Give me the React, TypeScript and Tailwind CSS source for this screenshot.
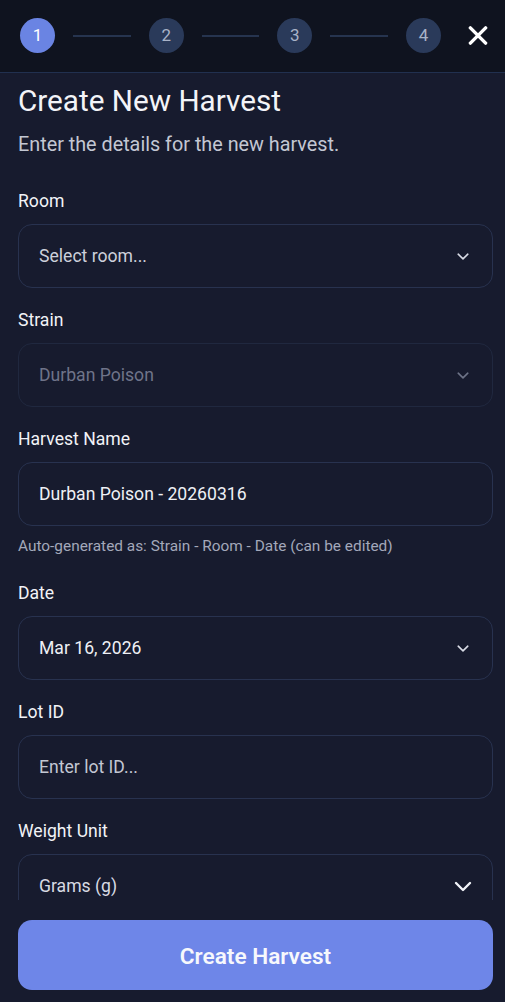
import { ReactNode } from "react"

const box = "h-[64px] rounded-[14px] border flex items-center pl-[20px] pr-[20px] text-[17.6px]"

function Chevron({ dim = false, big = false }: { dim?: boolean; big?: boolean }) {
  if (big) {
    return (
      <svg width="18" height="11" viewBox="0 0 18 11" className="shrink-0">
        <path d="M2 2 L9 9 L16 2" fill="none" stroke="#f1f3f8" strokeWidth="2.4" strokeLinecap="round" strokeLinejoin="round" />
      </svg>
    )
  }
  return (
    <div className="w-[18px] flex justify-center shrink-0">
      <svg width="12" height="7" viewBox="0 0 12 7">
        <path d="M1.2 1.2 L6 5.8 L10.8 1.2" fill="none" stroke={dim ? "#6d7387" : "#d9dce6"} strokeWidth="1.6" strokeLinecap="round" strokeLinejoin="round" />
      </svg>
    </div>
  )
}

function Field({ label, children, extra }: { label: string; children: ReactNode; extra?: ReactNode }) {
  return (
    <div className="flex flex-col">
      <label className="text-[17.6px] leading-[22px] text-[#f2f3f7] mb-[12px]">{label}</label>
      {children}
      {extra}
    </div>
  )
}

function Step({ n, active = false }: { n: number; active?: boolean }) {
  return (
    <div className={`w-[35px] h-[35px] rounded-full shrink-0 flex items-center justify-center text-[17px] ${active ? "bg-[#6a84e3] text-white" : "bg-[#2a3a5a] text-[#a9b3c8]"}`}>
      {n}
    </div>
  )
}

export default function App() {
  return (
    <div className="w-[505px] h-[1002px] flex flex-col bg-[#171b2e] font-['Roboto',sans-serif] overflow-hidden">
      {/* steps header */}
      <div className="h-[73px] shrink-0 bg-[#0f131f] border-b border-[#21304f] flex items-center pl-[20px] pr-[17px] pb-[1px]">
        <Step n={1} active />
        <div className="flex-1 h-[2px] bg-[#26344f] mx-[18px]" />
        <Step n={2} />
        <div className="flex-1 h-[2px] bg-[#26344f] mx-[18px]" />
        <Step n={3} />
        <div className="flex-1 h-[2px] bg-[#26344f] mx-[18px]" />
        <Step n={4} />
        <button className="ml-[27px] w-[20px] h-[20px] flex items-center justify-center">
          <svg width="21" height="21" viewBox="0 0 21 21">
            <path d="M2.5 2.5 L18.5 18.5 M18.5 2.5 L2.5 18.5" stroke="#ffffff" strokeWidth="3.6" strokeLinecap="round" />
          </svg>
        </button>
      </div>

      {/* form */}
      <div className="flex-1 overflow-hidden pl-[18px] pr-[12px] pt-[10px]">
        <h1 className="text-[29.7px] leading-[36px] text-[#f3f4f8]">Create New Harvest</h1>
        <p className="text-[19.8px] leading-[26px] text-[#c3c7d3] mt-[13px]">Enter the details for the new harvest.</p>

        <div className="flex flex-col gap-[21px] mt-[32px]">
          <Field label="Room">
            <div className={`${box} border-[#28324f] justify-between`}>
              <span className="text-[#cdd0db]">Select room...</span>
              <Chevron />
            </div>
          </Field>

          <Field label="Strain">
            <div className={`${box} border-[#20283f] justify-between`}>
              <span className="text-[#6f7489]">Durban Poison</span>
              <Chevron dim />
            </div>
          </Field>

          <Field
            label="Harvest Name"
            extra={<p className="text-[15.4px] leading-[20px] text-[#a3a8ba] mt-[10px] mb-[5px]">Auto-generated as: Strain - Room - Date (can be edited)</p>}
          >
            <div className={`${box} border-[#28324f]`}>
              <span className="text-[#eef0f5]">Durban Poison - 20260316</span>
            </div>
          </Field>

          <Field label="Date">
            <div className={`${box} border-[#28324f] justify-between`}>
              <span className="text-[#eef0f5]">Mar 16, 2026</span>
              <Chevron />
            </div>
          </Field>

          <Field label="Lot ID">
            <div className={`${box} border-[#28324f]`}>
              <span className="text-[#c3c7d3]">Enter lot ID...</span>
            </div>
          </Field>

          <Field label="Weight Unit">
            <div className={`${box} border-[#28324f] justify-between`}>
              <span className="text-[#d7dae3]">Grams (g)</span>
              <Chevron big />
            </div>
          </Field>
        </div>
      </div>

      {/* footer */}
      <div className="shrink-0 pl-[18px] pr-[12px] pt-[20px] pb-[12px]">
        <button className="w-full h-[70px] rounded-[14px] bg-[#6e86e8] text-[#f7f8fc] text-[22.6px] font-semibold pt-[3px]">
          Create Harvest
        </button>
      </div>
    </div>
  )
}
